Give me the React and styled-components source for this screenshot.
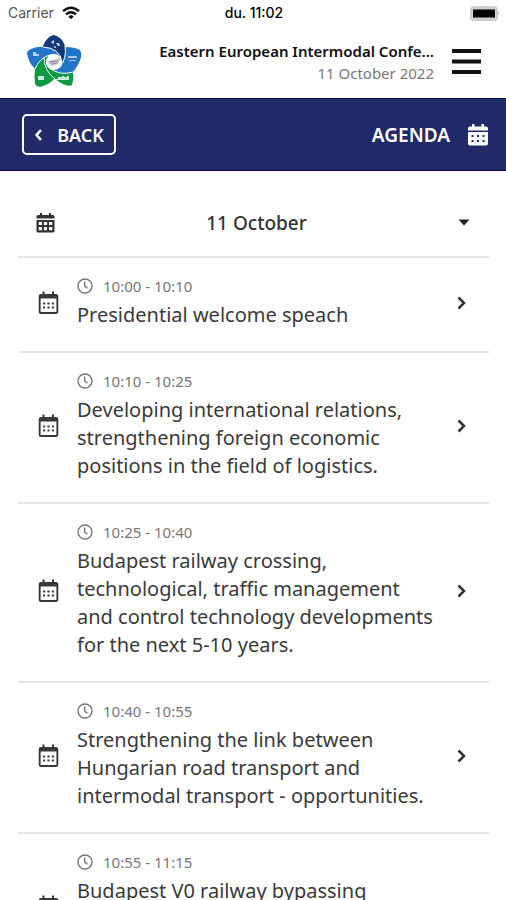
import React, { useState } from "react";
import styled, { createGlobalStyle } from "styled-components";

const GlobalStyle = createGlobalStyle`
  * { box-sizing: border-box; }
  body { margin: 0; background: #fff; }
  button { font: inherit; color: inherit; background: none; border: 0; padding: 0; cursor: pointer; }
  h1, p, ul { margin: 0; padding: 0; }
`;

const Screen = styled.div`
  display: flex;
  flex-direction: column;
  height: 100vh;
  overflow: hidden;
  background: #fff;
  color: #3a3a3a;
  font-family: "Noto Sans", sans-serif;
`;

const StatusBar = styled.div`
  display: grid;
  grid-template-columns: 1fr auto 1fr;
  align-items: center;
  height: 26px;
  flex: none;
  padding: 0 6px 0 8px;
  font: 14px/20px Inter, sans-serif;
  color: #555;
`;

const Carrier = styled.div`
  display: flex;
  align-items: center;
  gap: 8px;
`;

const Clock = styled.time`
  font-weight: 500;
  color: #000;
`;

const BatterySlot = styled.div`
  display: flex;
  justify-content: flex-end;
`;

const Header = styled.header`
  display: flex;
  align-items: center;
  flex: none;
  height: 72px;
  padding: 0 24px;
`;

const Heading = styled.div`
  flex: 1;
  min-width: 0;
  margin: 0 17px 0 66px;
  text-align: right;
`;

const EventName = styled.h1`
  overflow: hidden;
  text-overflow: ellipsis;
  white-space: nowrap;
  font-size: 15px;
  font-weight: 600;
  line-height: 22px;
  color: #111;
`;

const EventDate = styled.p`
  font-size: 15px;
  line-height: 22px;
  color: #777;
`;

const MenuButton = styled.button`
  display: flex;
  flex: none;
`;

const TitleBar = styled.nav`
  display: flex;
  align-items: center;
  justify-content: space-between;
  flex: none;
  height: 73px;
  padding: 0 18px 0 22px;
  background: #212a68;
  border-top: 1px solid #0b0d50;
  border-bottom: 1px solid #0b0d50;
  color: #fff;
`;

const BackButton = styled.button`
  && {
    display: flex;
    align-items: center;
    justify-content: center;
    gap: 14px;
    width: 94px;
    height: 41px;
    border: 2px solid #fff;
    border-radius: 5px;
    font-size: 18px;
    font-weight: 600;
  }
`;

const PageTitle = styled.div`
  display: flex;
  align-items: center;
  gap: 18px;
  font-size: 19px;
  font-weight: 600;
`;

const Content = styled.main`
  flex: 1;
  min-height: 0;
  padding: 18px 17px 0 18px;
  overflow-y: auto;
  scrollbar-width: none;
`;

const DayPicker = styled.button`
  && {
    display: grid;
    grid-template-columns: 61px 1fr 55px;
    align-items: center;
    width: 100%;
    height: 69px;
    border-bottom: 2px solid #e5e5e5;
    font-size: 19px;
    font-weight: 500;
    color: #333;
  }
  svg { margin-left: 18px; }
  svg:last-child { margin-left: 24px; }
`;

const Sessions = styled.ul`
  list-style: none;
`;

const SessionLink = styled.a`
  display: flex;
  align-items: center;
  padding: 18px 23px 22px 20px;
  border-bottom: 2px solid #e5e5e5;
  color: #3a3a3a;
  text-decoration: none;
  svg { flex: none; }
`;

const Details = styled.div`
  flex: 1;
  min-width: 0;
  margin: 0 16px 0 18px;
`;

const Time = styled.div`
  display: flex;
  align-items: center;
  gap: 10px;
  margin-bottom: 5px;
  font-size: 15px;
  line-height: 20px;
  color: #777;
`;

const Title = styled.p`
  min-height: ${(p) => p.$lines * 28}px;
  font-size: 20px;
  line-height: 28px;
  white-space: pre-line;
`;

const WifiIcon = () => (
  <svg width="18" height="14" viewBox="0 0 18 14" fill="none" stroke="#111" strokeWidth="2.4" aria-hidden="true">
    <path d="M1 5.2Q9-1.8 17 5.2M4 8.3Q9 4 14 8.3" />
    <path d="M6.3 10.5Q9 8.2 11.7 10.5L9 13.2Z" fill="#111" stroke="none" />
  </svg>
);

const BatteryIcon = () => (
  <svg width="30" height="15" viewBox="0 0 30 15" aria-label="Battery full">
    <rect x="1" y="1" width="26" height="13" rx="3" fill="#d0d0d0" stroke="#c6c6c6" strokeWidth="1.6" />
    <rect x="3" y="3.5" width="22" height="8" rx="0.6" fill="#000" />
    <path d="M28 5.5Q30 7.5 28 9.5Z" fill="#b5b5b5" />
  </svg>
);

const Logo = () => (
  <svg width="60" height="56" viewBox="0 0 60 56" aria-label="Conference logo">
    <path d="M19 12Q23 2 30 1Q38 3 41 12Q43 22 38 30Q35 16 19 14Z" fill="#123a78" />
    <path d="M3 19Q3 17 7 15Q14 12 20 13Q35 14 38 28L30 22Q18 21 11 35Q4 28 3 19Z" fill="#2375c8" />
    <path d="M41 13Q51 13 56 16Q58 19 57 23Q55 31 49 38Q36 43 24 34L34 34Q42 26 41 13Z" fill="#2375c8" />
    <path d="M11 35Q16 23 28 20L22 28Q22 37 31 44Q26 50 19 52Q13 54 11 50Q10 43 11 35Z" fill="#0a9b43" />
    <path d="M20 24Q22 34 30 37Q38 41 49 38Q50 45 48 51Q43 54 31 45Q21 38 20 24Z" fill="#0a9b43" />
    <path d="M19 13Q36 14 38 28M41 12Q43 24 36 33M49 38Q36 42 25 34M20 23Q20 37 31 45M11 35Q16 22 30 20" fill="none" stroke="#fff" strokeWidth="1" />
    <circle cx="30" cy="28" r="8" fill="#fff" />
    <path d="M24 29L27 26L33 25L36 26L34 30L28 32Z" fill="#c6c8cb" />
    <path d="M25 28L34 27M27 30L33 29" stroke="#888c94" />
    <path d="M34 24L37 26" stroke="#d66a70" />
    <g fill="#fff">
      <path d="M27 8L30 6V9L29 10ZM32 9H35L36 12H34ZM29 13L32 12V14Z" opacity=".8" />
      <path d="M9 18H12V20H15V22H9Z" opacity=".7" />
      <path d="M44 22H53V24H44ZM45 26H52V27H45Z" opacity=".6" />
      <path d="M14 42H20V46H14ZM31 45H34V43H38V42H40V43H43V42H45V46H31Z" opacity=".8" />
    </g>
  </svg>
);

const MenuIcon = () => (
  <svg width="31" height="28" viewBox="0 0 31 28" stroke="#111" strokeWidth="4" aria-hidden="true">
    <path d="M1 3H30M1 13.5H30M1 24H30" />
  </svg>
);

const BackChevron = () => (
  <svg width="9" height="14" viewBox="0 0 9 14" fill="none" stroke="currentColor" strokeWidth="2.6" aria-hidden="true">
    <path d="M7 2L2.5 7L7 12" />
  </svg>
);

const Chevron = () => (
  <svg width="9" height="14" viewBox="0 0 9 14" fill="none" stroke="#333" strokeWidth="2.5" aria-hidden="true">
    <path d="M1.5 1.5L7 7L1.5 12.5" />
  </svg>
);

const SolidCalendar = () => (
  <svg width="20" height="22" viewBox="0 0 20 22" fill="#fff" aria-hidden="true">
    <path fillRule="evenodd" d="M4 0H6.5V2.5H13.5V0H16V2.5H18Q20 2.5 20 4.5V6.5H0V4.5Q0 2.5 2 2.5H4ZM0 8H20V19.5Q20 21.5 18 21.5H2Q0 21.5 0 19.5ZM3.5 11V13H5.5V11ZM9 11V13H11V11ZM14.5 11V13H16.5V11ZM3.5 16V18H5.5V16ZM9 16V18H11V16ZM14.5 16V18H16.5V16Z" />
  </svg>
);

const GridCalendar = () => (
  <svg width="19" height="20" viewBox="0 0 19 20" fill="#333" aria-hidden="true">
    <path fillRule="evenodd" d="M4 0H6V2H13V0H15V2H17Q18.5 2 18.5 3.5V5.5H.5V3.5Q.5 2 2 2H4ZM.5 7H18.5V18Q18.5 19.5 17 19.5H2Q.5 19.5 .5 18ZM2.7 9V12H6V9ZM7.9 9V12H11.1V9ZM13 9V12H16.3V9ZM2.7 14V17.2H6V14ZM7.9 14V17.2H11.1V14ZM13 14V17.2H16.3V14Z" />
  </svg>
);

const OutlineCalendar = () => (
  <svg width="21" height="24" viewBox="0 0 21 24" aria-hidden="true">
    <path fill="#383838" fillRule="evenodd" d="M4.5 .5H6.5V3H14V.5H16V3H18Q20.3 3 20.3 5.3V20.7Q20.3 23 18 23H3Q.7 23 .7 20.7V5.3Q.7 3 3 3H4.5ZM2.6 7.5V21H18.4V7.5Z" />
    <path d="M5 12.5H16M5 16.5H16" stroke="#444" strokeWidth="2" strokeDasharray="2.2 2.2" />
  </svg>
);

const ClockIcon = () => (
  <svg width="16" height="16" viewBox="0 0 16 16" fill="none" stroke="#777" strokeWidth="1.4" aria-hidden="true">
    <circle cx="8" cy="8" r="7" />
    <path d="M7.7 3.5V8.2L10.5 10.3" />
  </svg>
);

const CaretIcon = () => (
  <svg width="12" height="7" viewBox="0 0 12 7" fill="#222" aria-hidden="true">
    <path d="M0.5 0.5H11.5L6 6.5Z" />
  </svg>
);

const sessions = [
  { time: "10:00 - 10:10", title: "Presidential welcome speach", lines: 1 },
  { time: "10:10 - 10:25", title: "Developing international relations,\nstrengthening foreign economic\npositions in the field of logistics.", lines: 3 },
  { time: "10:25 - 10:40", title: "Budapest railway crossing,\ntechnological, traffic management\nand control technology developments\nfor the next 5-10 years.", lines: 4 },
  { time: "10:40 - 10:55", title: "Strengthening the link between\nHungarian road transport and\nintermodal transport - opportunities.", lines: 3 },
  { time: "10:55 - 11:15", title: "Budapest V0 railway bypassing", lines: 3 },
];

export default function App() {
  const [open, setOpen] = useState(true);
  return (
    <Screen>
      <GlobalStyle />
      <StatusBar>
        <Carrier>Carrier <WifiIcon /></Carrier>
        <Clock>du. 11:02</Clock>
        <BatterySlot><BatteryIcon /></BatterySlot>
      </StatusBar>
      <Header>
        <Logo />
        <Heading>
          <EventName>Eastern European Intermodal Confe...</EventName>
          <EventDate>11 October 2022</EventDate>
        </Heading>
        <MenuButton aria-label="Menu"><MenuIcon /></MenuButton>
      </Header>
      <TitleBar>
        <BackButton><BackChevron />BACK</BackButton>
        <PageTitle>AGENDA <SolidCalendar /></PageTitle>
      </TitleBar>
      <Content>
        <DayPicker aria-expanded={open} onClick={() => setOpen(!open)}>
          <GridCalendar />
          <span>11 October</span>
          <CaretIcon />
        </DayPicker>
        {open && (
          <Sessions>
            {sessions.map((s) => (
              <li key={s.time}>
                <SessionLink href="#session">
                  <OutlineCalendar />
                  <Details>
                    <Time><ClockIcon />{s.time}</Time>
                    <Title $lines={s.lines}>{s.title}</Title>
                  </Details>
                  <Chevron />
                </SessionLink>
              </li>
            ))}
          </Sessions>
        )}
      </Content>
    </Screen>
  );
}
